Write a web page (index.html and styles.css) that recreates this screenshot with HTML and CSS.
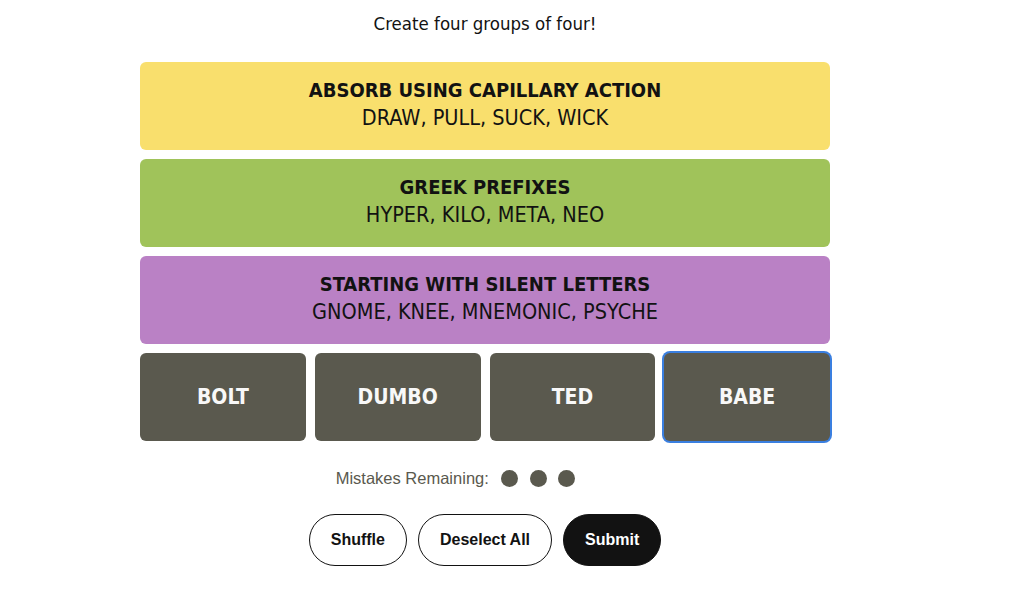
FILE: index.html
```html
<!DOCTYPE html>
<html lang="en">
  <head>
    <meta charset="UTF-8" />
    <meta name="viewport" content="width=device-width, initial-scale=1.0" />
    <title>Connections</title>
    <link rel="stylesheet" href="styles.css">
  </head>
  <body>
    <div class="game">
      <p class="intro">Create four groups of four!</p>

      <div class="board">
        <div class="solved yellow">
          <h3>ABSORB USING CAPILLARY ACTION</h3>
          <p>DRAW, PULL, SUCK, WICK</p>
        </div>
        <div class="solved green">
          <h3>GREEK PREFIXES</h3>
          <p>HYPER, KILO, META, NEO</p>
        </div>
        <div class="solved purple">
          <h3>STARTING WITH SILENT LETTERS</h3>
          <p>GNOME, KNEE, MNEMONIC, PSYCHE</p>
        </div>
        <div class="tiles">
          <button class="tile">BOLT</button>
          <button class="tile">DUMBO</button>
          <button class="tile">TED</button>
          <button class="tile focused">BABE</button>
        </div>
      </div>

      <div class="mistakes">
        <span class="label">Mistakes Remaining:</span>
        <span class="dot"></span>
        <span class="dot"></span>
        <span class="dot"></span>
      </div>

      <div class="actions">
        <button class="pill">Shuffle</button>
        <button class="pill">Deselect All</button>
        <button class="pill dark">Submit</button>
      </div>
    </div>
  </body>
</html>
```

FILE: styles.css
```css
body {
  margin: 0;
  font-family: "Liberation Sans Narrow", "DejaVu Sans Condensed", "Liberation Sans", sans-serif;
  color: #121212;
  background: #fff;
}

.game {
  width: 690px;
  margin: 0 auto 0 140px;
  display: flex;
  flex-direction: column;
  align-items: center;
}

.intro {
  margin: 12px 0 0;
  font-size: 18.5px;
  line-height: 24px;
  height: 26px;
}

.board {
  width: 100%;
  margin-top: 24px;
  display: flex;
  flex-direction: column;
  gap: 9px;
}

.solved {
  height: 88px;
  box-sizing: border-box;
  padding-bottom: 4px;
  border-radius: 6px;
  display: flex;
  flex-direction: column;
  align-items: center;
  justify-content: center;
}

.solved h3 {
  margin: 0;
  font-size: 20px;
  line-height: 28px;
  font-weight: bold;
}

.solved p {
  margin: 0;
  font-size: 21.5px;
  line-height: 28px;
}

.yellow { background: #f9df6d; }
.green { background: #a0c35a; }
.purple { background: #ba81c5; }

.tiles {
  display: grid;
  grid-template-columns: repeat(4, 1fr);
  gap: 9px;
}

.tile {
  height: 88px;
  border: none;
  border-radius: 6px;
  background: #5a594e;
  color: #f8f8f8;
  font-family: inherit;
  font-size: 21px;
  font-weight: bold;
  cursor: pointer;
}

.tile.focused {
  box-shadow: 0 0 0 2px #3a7fe0;
}

/* the row sits a little left of centre, as in the game */
.mistakes {
  margin: 28px 59px 0 0;
  display: flex;
  align-items: center;
  gap: 11.5px;
  font-family: "Liberation Sans", sans-serif;
  font-size: 16.5px;
  color: #5a594e;
}

.mistakes .label {
  margin-right: 1px;
}

.dot {
  width: 17px;
  height: 17px;
  border-radius: 50%;
  background: #5a594e;
}

.actions {
  margin-top: 26px;
  display: flex;
  gap: 11px;
}

.pill {
  height: 52px;
  padding: 0 21px;
  border: 1px solid #121212;
  border-radius: 26px;
  background: #fff;
  color: #121212;
  font-family: "Liberation Sans", sans-serif;
  font-size: 16px;
  font-weight: bold;
  cursor: pointer;
}

.pill.dark {
  background: #121212;
  color: #fff;
}
```
